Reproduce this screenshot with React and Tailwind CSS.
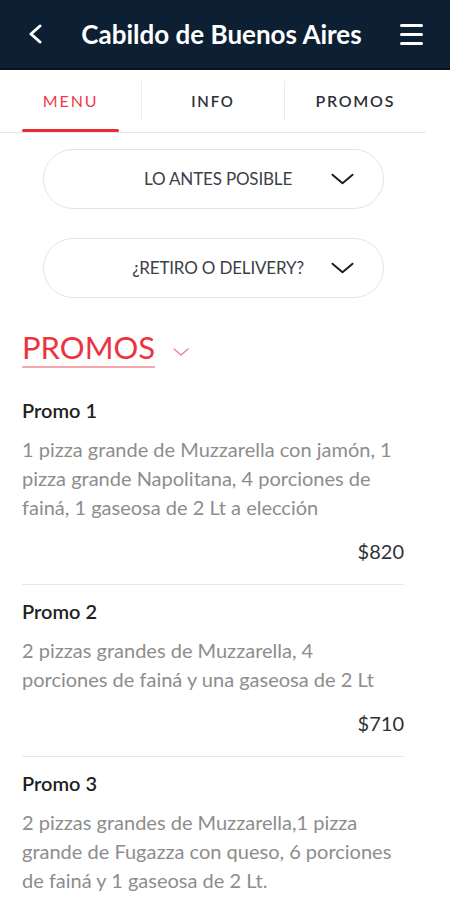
const promos = [
  {
    name: "Promo 1",
    desc: "1 pizza grande de Muzzarella con jamón, 1 pizza grande Napolitana, 4 porciones de fainá, 1 gaseosa de 2 Lt a elección",
    price: "$820",
  },
  {
    name: "Promo 2",
    desc: "2 pizzas grandes de Muzzarella, 4 porciones de fainá y una gaseosa de 2 Lt",
    price: "$710",
  },
  {
    name: "Promo 3",
    desc: "2 pizzas grandes de Muzzarella,1 pizza grande de Fugazza con queso, 6 porciones de fainá y 1 gaseosa de 2 Lt.",
    price: "$650",
  },
];

function Chevron({ className }) {
  return (
    <svg viewBox="0 0 24 12" className={className} fill="none" stroke="currentColor" strokeWidth="2" strokeLinecap="round" strokeLinejoin="round">
      <path d="M1.5 1.5 12 10.5 22.5 1.5" />
    </svg>
  );
}

function Select({ label }) {
  return (
    <div className="mx-[43px] w-[341px] h-[60px] rounded-full border border-[#e4e4e4] flex items-center pl-[61px] pr-[29px]">
      <span className="flex-1 text-center text-[17px] text-[#3b4048] tracking-[-0.01em]">{label}</span>
      <Chevron className="w-[23px] h-[12px] text-[#1c1c1c]" />
    </div>
  );
}

export default function App() {
  return (
    <div className="min-h-screen bg-white" style={{ fontFamily: "Lato, 'Noto Sans', sans-serif" }}>
      {/* top bar */}
      <header className="h-[70px] bg-[#0d1f33] border-b-2 border-[#07121f] flex items-center justify-between pl-[28px] pr-[27px]">
        <svg viewBox="0 0 14 20" className="w-[14px] h-[20px]" fill="none" stroke="white" strokeWidth="3" strokeLinecap="round" strokeLinejoin="round">
          <path d="M12 2 3 10l9 8" />
        </svg>
        <h1 className="text-white text-[26px] font-bold leading-none pl-[1px]">Cabildo de Buenos Aires</h1>
        <div className="w-[23px] flex flex-col gap-[6px]">
          <span className="h-[3px] bg-white rounded-sm" />
          <span className="h-[3px] bg-white rounded-sm" />
          <span className="h-[3px] bg-white rounded-sm" />
        </div>
      </header>

      <div className="w-[426px]">
        {/* tabs */}
        <nav className="h-[63px] flex items-center border-b border-[#e6e6e6]">
          <div className="flex-1 h-full flex flex-col">
            <div className="flex-1 flex items-center justify-center pt-[3px] text-[16px] tracking-[0.12em] text-[#ef3b47]">MENU</div>
            <div className="h-[3px] mx-[22px] bg-[#ef2a37] rounded-full" />
          </div>
          <div className="w-px h-[40px] bg-[#ececec]" />
          <div className="flex-1 h-full flex items-center justify-center text-[15px] tracking-[0.12em] text-[#2b2f36] font-semibold">INFO</div>
          <div className="w-px h-[40px] bg-[#ececec]" />
          <div className="flex-1 h-full flex items-center justify-center text-[16px] tracking-[0.11em] text-[#2b2f36] font-semibold">PROMOS</div>
        </nav>

        <div className="pt-[16px] flex flex-col gap-[29px]">
          <Select label="LO ANTES POSIBLE" />
          <Select label="¿RETIRO O DELIVERY?" />
        </div>

        {/* section */}
        <div className="px-[22px] mt-[30px] flex items-center">
          <h2 className="text-[31px] leading-[38px] text-[#ec3441] border-b-2 border-[#f5a9af]">PROMOS</h2>
          <Chevron className="ml-[18px] mt-[8px] w-[16px] h-[8px] text-[#f17f89]" />
        </div>

        <ul className="px-[22px] pt-[16px]">
          {promos.map((p) => (
            <li key={p.name} className="pt-[14px] pb-[21px] border-b border-[#e8e8e8]">
              <h3 className="text-[20px] leading-[24px] font-semibold text-[#1d1f24]">{p.name}</h3>
              <p className="mt-[13px] pr-[8px] text-[20px] leading-[29px] text-[#8d8d8d]">{p.desc}</p>
              <p className="mt-[17px] text-right text-[20px] leading-[24px] text-[#2f3238]">{p.price}</p>
            </li>
          ))}
        </ul>
      </div>
    </div>
  );
}
